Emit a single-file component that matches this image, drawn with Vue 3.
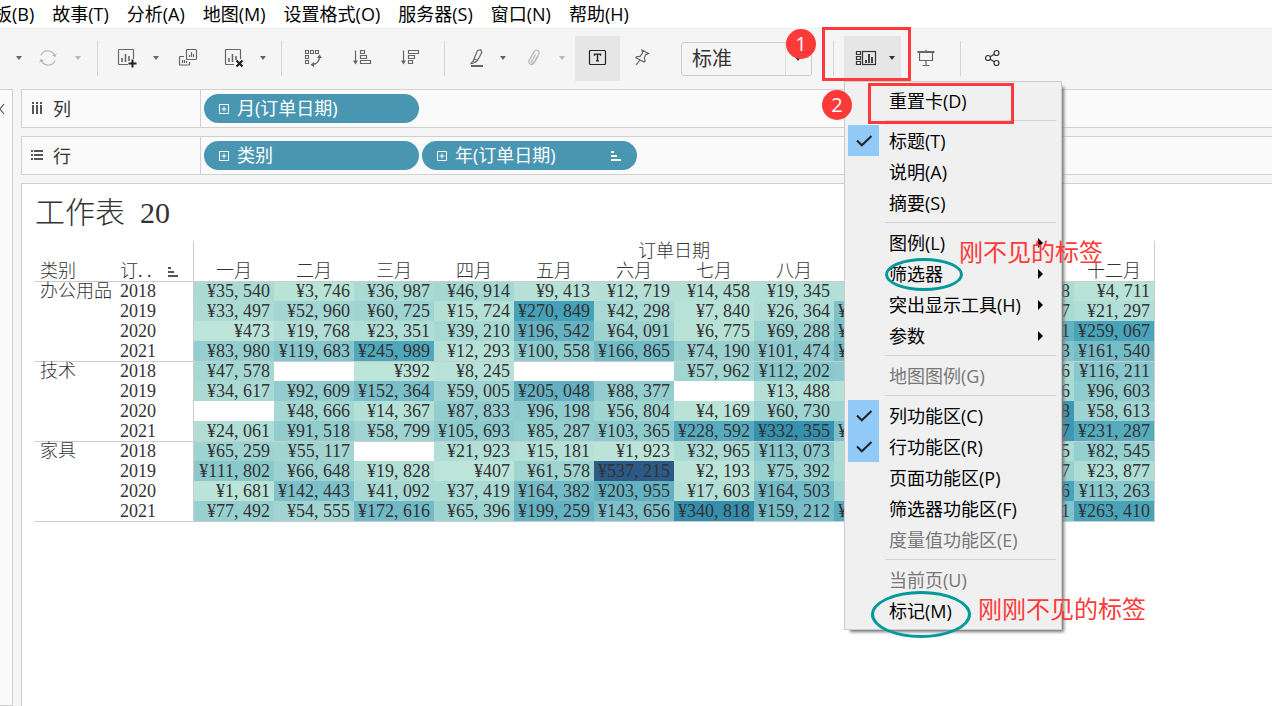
<script setup>
const menus = ['板(B)', '故事(T)', '分析(A)', '地图(M)', '设置格式(O)', '服务器(S)', '窗口(N)', '帮助(H)']

const months = ['一月', '二月', '三月', '四月', '五月', '六月', '七月', '八月', '九月', '十月', '十一月', '十二月']

const groups = [
  {
    name: '办公用品',
    rows: [
      [2018, [35540, 3746, 36987, 46914, 9413, 12719, 14458, 19345, 18342, null, 31428, 4711]],
      [2019, [33497, 52960, 60725, 15724, 270849, 42298, 7840, 26364, 141260, null, 37417, 21297]],
      [2020, [473, 19768, 23351, 39210, 196542, 64091, 6775, 69288, 142035, null, 201841, 259067]],
      [2021, [83980, 119683, 245989, 12293, 100558, 166865, 74190, 101474, 165372, null, 130463, 161540]]
    ]
  },
  {
    name: '技术',
    rows: [
      [2018, [47578, null, 392, 8245, null, null, 57962, 112202, 98014, null, 36216, 116211]],
      [2019, [34617, 92609, 152364, 59005, 205048, 88377, null, 13488, 12075, null, 36706, 96603]],
      [2020, [null, 48666, 14367, 87833, 96198, 56804, 4169, 60730, 60912, null, 302158, 58613]],
      [2021, [24061, 91518, 58799, 105693, 85287, 103365, 228592, 332355, 150280, null, 305627, 231287]]
    ]
  },
  {
    name: '家具',
    rows: [
      [2018, [65259, 55117, null, 21923, 15181, 1923, 32965, 113073, 25310, null, 27845, 82545]],
      [2019, [111802, 66648, 19828, 407, 61578, 537215, 2193, 75392, 38122, null, 75307, 23877]],
      [2020, [1681, 142443, 41092, 37419, 164382, 203955, 17603, 164503, 65230, null, 260346, 113263]],
      [2021, [77492, 54555, 172616, 65396, 199259, 143656, 340818, 159212, 229410, null, 130821, 263410]]
    ]
  }
]

const ramp = ['bce4d8', 'aedcd5', 'a1d5d2', '95cecf', '89c8cc', '7ec1ca', '72bac6', '66b2c2', '59acbe', '4ba5ba',
  '419eb6', '3b96b2', '358ead', '3586a7', '347ea1', '32779b', '316f96', '2f6790', '2d608a', '2c5985']

function shade(value) {
  if (value === null) return 'transparent'
  const pos = (value / 537215) * (ramp.length - 1)
  const low = Math.min(Math.floor(pos), ramp.length - 2)
  const part = pos - low
  const rgb = [0, 2, 4].map((at) => {
    const a = parseInt(ramp[low].slice(at, at + 2), 16)
    const b = parseInt(ramp[low + 1].slice(at, at + 2), 16)
    return Math.round(a + (b - a) * part)
  })
  return `rgb(${rgb.join(',')})`
}

const thousands = (v) => Math.floor(v / 1000)
const rest = (v) => String(v % 1000).padStart(3, '0')

const cardMenu = [
  [{ text: '重置卡(D)' }],
  [{ text: '标题(T)', checked: true }, { text: '说明(A)' }, { text: '摘要(S)' }],
  [{ text: '图例(L)', sub: true }, { text: '筛选器', sub: true }, { text: '突出显示工具(H)', sub: true }, { text: '参数', sub: true }],
  [{ text: '地图图例(G)', disabled: true }],
  [
    { text: '列功能区(C)', checked: true },
    { text: '行功能区(R)', checked: true },
    { text: '页面功能区(P)' },
    { text: '筛选器功能区(F)' },
    { text: '度量值功能区(E)', disabled: true }
  ],
  [{ text: '当前页(U)', disabled: true }, { text: '标记(M)' }]
]
</script>

<template>
  <div class="app">
    <nav class="menubar">
      <button v-for="m in menus" :key="m" type="button">{{ m }}</button>
    </nav>

    <div class="toolbar">
      <button type="button" class="arrow" aria-label="更多"></button>
      <button type="button" class="dim" aria-label="刷新">
        <svg width="20" height="20" viewBox="0 0 20 20" fill="none" stroke="currentColor" stroke-width="1.2">
          <path d="M3 7.5A7.3 7.3 0 0 1 16.7 8M17 12.5A7.3 7.3 0 0 1 3.3 12" />
          <path d="M14 7.2l3.2 2 1.6-3.6zM6 12.8l-3.2-2-1.6 3.6z" fill="currentColor" stroke="none" />
        </svg>
      </button>
      <button type="button" class="arrow dim" aria-label="刷新选项"></button>
      <span class="rule"></span>
      <button type="button" aria-label="新建工作表">
        <svg width="20" height="20" viewBox="0 0 20 20" fill="none" stroke="currentColor" stroke-width="1.2">
          <path d="M16.5 11V2.2q0-.7-.7-.7H2.2q-.7 0-.7.7v13.6q0 .7.7.7H11" />
          <path d="M5 14v-4M8.5 14V6M12 13V8" stroke-width="1.6" />
          <path d="M15.5 11.5v8M11.5 15.5h8" stroke="#222" stroke-width="2" />
        </svg>
      </button>
      <button type="button" class="arrow" aria-label="新建选项"></button>
      <button type="button" aria-label="复制工作表">
        <svg width="20" height="20" viewBox="0 0 20 20" fill="none" stroke="currentColor" stroke-width="1.2">
          <rect x="8.5" y="1.5" width="10" height="10" rx="1" />
          <path d="M6 8.5H2.2q-.7 0-.7.7v7.1q0 .7.7.7h8.6q.7 0 .7-.7V14" />
          <path d="M11.5 9V7M13.5 9V4M15.5 9V6M4.5 15v-3M6.5 15v-3M8.5 15v-2" />
        </svg>
      </button>
      <button type="button" aria-label="清除工作表">
        <svg width="20" height="20" viewBox="0 0 20 20" fill="none" stroke="currentColor" stroke-width="1.2">
          <path d="M16.5 11V2.2q0-.7-.7-.7H2.2q-.7 0-.7.7v13.6q0 .7.7.7H10" />
          <path d="M5 14v-4M8.5 14V6M12 12V8" stroke-width="1.6" />
          <path d="M12.5 12.5l6 6M18.5 12.5l-6 6" stroke="#222" stroke-width="2.2" />
        </svg>
      </button>
      <button type="button" class="arrow" aria-label="清除选项"></button>
      <span class="rule"></span>
      <button type="button" aria-label="交换行和列">
        <svg width="20" height="20" viewBox="0 0 20 20" fill="none" stroke="currentColor" stroke-width="1.1">
          <path d="M2.5 2.5h3v3h-3zM7.5 2.5h3v3h-3zM12.5 2.5h3v3h-3zM2.5 7.5h3v3h-3zM2.5 12.5h3v3h-3z" />
          <path d="M16.5 8.500q0 7-7 8" stroke-width="1.3" />
          <path d="M14 10l2.500-3.500L19 10zM11 14l-3.500 2.700 3.700 2.600z" fill="currentColor" stroke="none" />
        </svg>
      </button>
      <button type="button" aria-label="升序排序">
        <svg width="20" height="20" viewBox="0 0 20 20" fill="none" stroke="currentColor" stroke-width="1.2">
          <path d="M3.5 2.500V15" /><path d="M1 12.500h5l-2.500 4z" fill="currentColor" stroke="none" />
          <path d="M8.5 2.500h4v3h-4zM8.500 7.500h6v3h-6zM8.500 12.500h10v3h-10z" />
        </svg>
      </button>
      <button type="button" aria-label="降序排序">
        <svg width="20" height="20" viewBox="0 0 20 20" fill="none" stroke="currentColor" stroke-width="1.2">
          <path d="M3.5 2.500V15" /><path d="M1 12.500h5l-2.500 4z" fill="currentColor" stroke="none" />
          <path d="M8.5 2.500h10v3h-10zM8.500 7.500h6v3h-6zM8.500 12.500h4v3h-4z" />
        </svg>
      </button>
      <span class="rule"></span>
      <button type="button" aria-label="突出显示">
        <svg width="20" height="20" viewBox="0 0 20 20" fill="none" stroke="currentColor" stroke-width="1.2">
          <path d="M10.5 2.500l3.300-.8 1 2.800-4.300 8-3.500-1.500zM7 11l-1 2.500 2 1 2.500-2M5.500 13.500L4 15.500l2.500-.2" />
          <path d="M4 18h12" stroke-width="2" />
        </svg>
      </button>
      <button type="button" class="arrow" aria-label="突出显示选项"></button>
      <button type="button" class="dim" aria-label="组成员">
        <svg width="20" height="20" viewBox="0 0 20 20" fill="none" stroke="currentColor" stroke-width="1.2">
          <path d="M11.5 6.500l-3.800 6.600c-.9 1.700 1.200 2.800 2.200 1.200l4.800-8.200c1.700-3-2.700-5.600-4.500-2.500L5.300 11.900c-2 3.800 2.700 6.300 4.900 2.900l4.100-7" />
        </svg>
      </button>
      <button type="button" class="arrow dim" aria-label="组成员选项"></button>
      <button type="button" class="label-toggle" aria-label="显示标记标签" aria-pressed="true">
        <svg width="20" height="20" viewBox="0 0 20 20" fill="none" stroke="#222" stroke-width="1.2">
          <rect x="1.5" y="2.5" width="16" height="14" rx="1" />
          <path d="M6.5 7.700V6.100h6v1.600M9.500 6.100v6.800M8 12.900h3" stroke-width="1.4" />
        </svg>
      </button>
      <button type="button" aria-label="固定轴">
        <svg width="20" height="20" viewBox="0 0 20 20" fill="none" stroke="currentColor" stroke-width="1.2">
          <path d="M10 2l6.500 3.500-1.600.8-.9-.1-1.700 3.600.8 3.400-1.200.9-8-4.200.9-1.300 3.200-.2 2.600-3.300zM8 12l-4 5" />
        </svg>
      </button>
      <span class="fit">
        <select aria-label="适合">
          <option>标准</option>
        </select>
        <i class="tri"></i>
      </span>
      <span class="rule tail"></span>
      <div class="cards">
        <button type="button" class="cards-btn" aria-label="显示/隐藏卡" aria-expanded="true">
          <svg width="22" height="20" viewBox="0 0 22 20" fill="none" stroke="#333" stroke-width="1.2">
            <path d="M1.5 3.500h4v3h-4zM1.500 8.500h4v3h-4zM1.500 13.500h4v3h-4z" />
            <rect x="7.5" y="3.5" width="13" height="13" />
            <path d="M11 15v-3M14 15V6M17 15V9" stroke-width="1.8" />
          </svg>
          <i class="tri"></i>
        </button>
        <div class="card-menu" role="menu">
          <div v-for="(group, g) in cardMenu" :key="g" class="menu-group">
            <button
              v-for="item in group"
              :key="item.text"
              type="button"
              role="menuitem"
              class="menu-item"
              :disabled="item.disabled"
            >
              <span class="tick" :class="{ on: item.checked }">
                <svg v-if="item.checked" width="18" height="14" viewBox="0 0 18 14" fill="none" stroke="#222" stroke-width="2">
                  <path d="M2 6.500l4.800 4.800L16.500 2" />
                </svg>
              </span>
              <span class="menu-text">{{ item.text }}</span>
              <i v-if="item.sub" class="sub"></i>
            </button>
          </div>
        </div>
      </div>
      <button type="button" aria-label="演示模式">
        <svg width="20" height="20" viewBox="0 0 20 20" fill="none" stroke="currentColor" stroke-width="1.2">
          <path d="M1.5 4h17" stroke-width="2" /><path d="M10 1.800V4M3.500 5v7.500h13V5M10 12.500v5M6.500 17.500h7" />
        </svg>
      </button>
      <span class="rule"></span>
      <button type="button" aria-label="共享">
        <svg width="20" height="20" viewBox="0 0 20 20" fill="none" stroke="#333" stroke-width="1.2">
          <circle cx="5" cy="10" r="2.5" /><circle cx="13.5" cy="5" r="2.5" /><circle cx="13.5" cy="15" r="2.5" />
          <path d="M7.2 8.700l4.100-2.400M7.200 11.300l4.100 2.400" />
        </svg>
      </button>
    </div>

    <div class="workspace">
      <aside class="side">
        <svg width="6" height="12" viewBox="0 0 6 12" fill="none" stroke="#555" stroke-width="1.2"><path d="M4 1L0 6l4 5" /></svg>
      </aside>
      <main class="content">
        <section class="shelf">
          <h2>
            <svg width="14" height="14" viewBox="0 0 14 14" fill="#555"><path d="M2 1h2v2H2zM6 1h2v2H6zM10 1h2v2h-2zM2 4h2v9H2zM6 4h2v9H6zM10 4h2v9h-2z" /></svg>
            列
          </h2>
          <div class="pills">
            <button type="button" class="pill">
              <svg width="10" height="10" viewBox="0 0 10 10" fill="none" stroke="#fff"><path d="M.5.5h9v9h-9zM5 2.500v5M2.500 5h5" /></svg>
              <span>月(订单日期)</span>
            </button>
          </div>
        </section>
        <section class="shelf">
          <h2>
            <svg width="14" height="14" viewBox="0 0 14 14" fill="#555"><path d="M1 2h2v2H1zM1 6h2v2H1zM1 10h2v2H1zM4 2h9v2H4zM4 6h9v2H4zM4 10h9v2H4z" /></svg>
            行
          </h2>
          <div class="pills">
            <button type="button" class="pill">
              <svg width="10" height="10" viewBox="0 0 10 10" fill="none" stroke="#fff"><path d="M.5.5h9v9h-9zM5 2.500v5M2.500 5h5" /></svg>
              <span>类别</span>
            </button>
            <button type="button" class="pill">
              <svg width="10" height="10" viewBox="0 0 10 10" fill="none" stroke="#fff"><path d="M.5.5h9v9h-9zM5 2.500v5M2.500 5h5" /></svg>
              <span>年(订单日期)</span>
              <svg class="sorted" width="10" height="10" viewBox="0 0 10 10" fill="#fff"><path d="M0 0h3v2H0zM0 4h6v2H0zM0 8h10v2H0z" /></svg>
            </button>
          </div>
        </section>

        <section class="sheet">
          <h1><span>工作表</span><span>20</span></h1>
          <table>
            <colgroup>
              <col class="c-cat" />
              <col class="c-year" />
              <col v-for="m in months" :key="m" class="c-month" />
            </colgroup>
            <thead>
              <tr>
                <td colspan="2" class="edge"></td>
                <th :colspan="months.length" class="span-head">订单日期</th>
              </tr>
              <tr>
                <th class="left">类别</th>
                <th class="left edge year-head">
                  <div>
                    <span>订<i class="dot">.</i><i class="dot">.</i></span>
                    <svg width="10" height="10" viewBox="0 0 10 10" fill="#555"><path d="M0 0h3v2H0zM0 4h6v2H0zM0 8h10v2H0z" /></svg>
                  </div>
                </th>
                <th v-for="m in months" :key="m">{{ m }}</th>
              </tr>
            </thead>
            <tbody v-for="group in groups" :key="group.name">
              <tr v-for="(row, r) in group.rows" :key="row[0]">
                <th v-if="r === 0" :rowspan="group.rows.length" class="left cat">{{ group.name }}</th>
                <th class="left edge">{{ row[0] }}</th>
                <td v-for="(v, c) in row[1]" :key="c" class="num" :style="{ backgroundColor: shade(v) }">
                  <template v-if="v !== null">¥<template v-if="v > 999">{{ thousands(v) }}<span class="comma">,</span>{{ rest(v) }}</template><template v-else>{{ v }}</template></template>
                </td>
              </tr>
            </tbody>
          </table>
        </section>
      </main>
    </div>

    <div class="mark box box-button"></div>
    <div class="mark box box-reset"></div>
    <div class="mark badge badge-one">1</div>
    <div class="mark badge badge-two">2</div>
    <div class="mark oval oval-filter"></div>
    <div class="mark oval oval-marks"></div>
    <div class="mark note note-filter">刚不见的标签</div>
    <div class="mark note note-marks">刚刚不见的标签</div>
  </div>
</template>

<style>
body {
  margin: 0;
}
</style>

<style scoped>
.app {
  position: relative;
  display: flex;
  flex-direction: column;
  min-height: 100vh;
  overflow: hidden;
  background: #f5f5f5;
  color: #333;
  font-family: "Open Sans", "Noto Sans CJK SC", sans-serif;
  font-size: 18px;
}
.app * {
  box-sizing: border-box;
}
button,
select {
  margin: 0;
  padding: 0;
  border: 0;
  background: none;
  color: inherit;
  font: inherit;
}
svg {
  flex: none;
  display: block;
}
.menubar {
  display: flex;
  gap: 18px;
  height: 28px;
  margin-left: -6px;
  background: #fff;
  color: #000;
}
.menubar button {
  line-height: 28px;
  white-space: nowrap;
}
.toolbar {
  display: grid;
  grid-template-columns:
    18px 40px 20px 18px 42px 16px 47px 46px 12px 24px 40px 58px 38px 30px 36px 16px 46px 10px
    53px 44px 148px 32px 57px 50px 18px 48px;
  align-items: center;
  justify-items: center;
  height: 61px;
  padding: 7px 0 8px 10px;
  border-top: 1px solid #efefef;
}
.toolbar > button {
  display: flex;
  align-items: center;
  justify-content: center;
  height: 45px;
  padding-bottom: 1px;
  color: #666;
}
.toolbar > button.dim {
  color: #b8b8b8;
}
.arrow::before,
.tri {
  content: "";
  border: 3px solid transparent;
  border-top: 4px solid currentColor;
  border-bottom: 0;
}
.rule {
  width: 1px;
  height: 35px;
  background: #d4d4d4;
}
.rule.tail {
  justify-self: end;
  margin-right: 10px;
}
.toolbar > .label-toggle {
  justify-self: end;
  width: 45px;
  background: #e6e6e6;
}
.fit {
  display: grid;
  grid-template-columns: 1fr 26px;
  align-items: center;
  justify-items: center;
  justify-self: end;
  width: 131px;
  height: 34px;
  border: 1px solid #ccc;
  border-radius: 3px;
  background: linear-gradient(#ddd, #ddd) 103px 0 / 1px 100% no-repeat;
}
.fit select {
  grid-area: 1 / 1 / 2 / 3;
  width: 100%;
  height: 32px;
  padding-left: 10px;
  appearance: none;
  font-size: 20px;
}
.fit .tri {
  grid-area: 1 / 2;
}
.cards {
  position: relative;
  width: 57px;
}
.cards-btn {
  display: flex;
  align-items: center;
  gap: 12px;
  width: 100%;
  height: 45px;
  padding: 0 0 1px 11px;
  background: #e6e6e6;
}
.card-menu {
  position: absolute;
  z-index: 2;
  top: 45px;
  left: 0;
  width: 218px;
  padding: 3px;
  border: 1px solid #ccc;
  background: #f0f0f0;
  box-shadow: 4px 4px 3px -2px #777;
  color: #000;
}
.menu-group + .menu-group {
  padding-top: 9px;
  background: linear-gradient(#d2d2d2, #d2d2d2) 37px 4px / 171px 1px no-repeat;
}
.menu-item {
  display: flex;
  align-items: center;
  width: 100%;
  height: 31px;
  padding-right: 15px;
  text-align: left;
}
.menu-item:disabled {
  color: #777;
}
.tick {
  display: flex;
  align-items: center;
  justify-content: center;
  flex: none;
  width: 31px;
  height: 31px;
  margin-right: 10px;
}
.tick.on {
  background: #91c9f7;
}
.menu-text {
  flex: 1;
  line-height: 32px;
  white-space: nowrap;
}
.sub {
  border: 5px solid transparent;
  border-left-color: #000;
  border-right: 0;
}
.workspace {
  flex: 1;
  display: flex;
}
.side {
  flex: none;
  width: 13px;
  padding-top: 13px;
  border: 1px solid #d0d0d0;
  border-left: 0;
  background: #fafafa;
}
.content {
  flex: 1;
  display: flex;
  flex-direction: column;
  gap: 8px;
  min-width: 0;
  padding-left: 8px;
}
.shelf {
  display: flex;
  height: 39px;
  border: 1px solid #d0d0d0;
  border-right: 0;
  background: #fafafa;
}
.shelf h2 {
  display: flex;
  align-items: center;
  gap: 9px;
  width: 179px;
  margin: 0;
  padding: 0 0 1px 8px;
  border-right: 1px solid #d0d0d0;
  font-size: 18px;
  font-weight: 400;
}
.pills {
  display: flex;
  align-items: center;
  gap: 3px;
  padding-left: 3px;
}
.pill {
  display: flex;
  align-items: center;
  gap: 8px;
  width: 215px;
  height: 29px;
  padding: 0 16px 0 15px;
  border-radius: 15px;
  background: #4996b2;
  color: #fff;
  line-height: 29px;
}
.sorted {
  margin-left: auto;
}
.sheet {
  flex: 1;
  padding: 10px 0 0 12px;
  border: 1px solid #d0d0d0;
  border-width: 1px 0 0 1px;
  background: #fff;
  font-family: "Liberation Serif", "Noto Sans CJK SC", serif;
}
h1 {
  display: flex;
  gap: 15px;
  margin: 0 0 10px 1px;
  font-size: 30px;
  font-weight: 300;
  line-height: 37px;
}
table {
  width: 1121px;
  border-right: 1px solid #ccc;
  border-bottom: 1px solid #ccc;
  border-spacing: 0;
  table-layout: fixed;
}
.c-cat {
  width: 80px;
}
.c-year {
  width: 80px;
}
.c-month {
  width: 80px;
}
th,
td {
  height: 20px;
  padding: 0;
  font-weight: 300;
  line-height: 19px;
  white-space: nowrap;
}
thead th {
  padding-top: 1px;
}
.left {
  padding-left: 6px;
  text-align: left;
  vertical-align: top;
}
.edge {
  border-right: 1px solid #ccc;
}
.year-head div {
  display: flex;
  align-items: center;
  justify-content: space-between;
  padding-right: 15px;
}
.dot {
  display: inline-block;
  width: 9px;
  font-style: normal;
}
tbody tr > * {
  padding-top: 1px;
}
tbody tr:first-child > * {
  padding-top: 0;
  border-top: 1px solid #ccc;
}
.num {
  padding-right: 4px;
  text-align: right;
}
.comma {
  display: inline-block;
  width: 9px;
  text-align: left;
}
.mark {
  position: absolute;
  z-index: 3;
  pointer-events: none;
}
.box {
  border: 3px solid #fd3a3a;
}
.box-button {
  top: 27px;
  left: 822px;
  width: 89px;
  height: 54px;
}
.box-reset {
  top: 83px;
  left: 868px;
  width: 146px;
  height: 41px;
}
.badge {
  width: 30px;
  height: 30px;
  border-radius: 50%;
  background: #fd3a3a;
  color: #fff;
  font-size: 20px;
  line-height: 29px;
  text-align: center;
}
.badge-one {
  top: 29px;
  left: 786px;
}
.badge-two {
  top: 90px;
  left: 822px;
}
.oval {
  border: 3px solid #009999;
  border-radius: 50%;
}
.oval-filter {
  top: 258px;
  left: 885px;
  width: 78px;
  height: 33px;
}
.oval-marks {
  top: 591px;
  left: 871px;
  width: 100px;
  height: 47px;
}
.note {
  color: #fd3a3a;
  font-size: 24px;
  line-height: 32px;
  white-space: nowrap;
}
.note-filter {
  top: 236px;
  left: 959px;
}
.note-marks {
  top: 593px;
  left: 978px;
}
</style>
